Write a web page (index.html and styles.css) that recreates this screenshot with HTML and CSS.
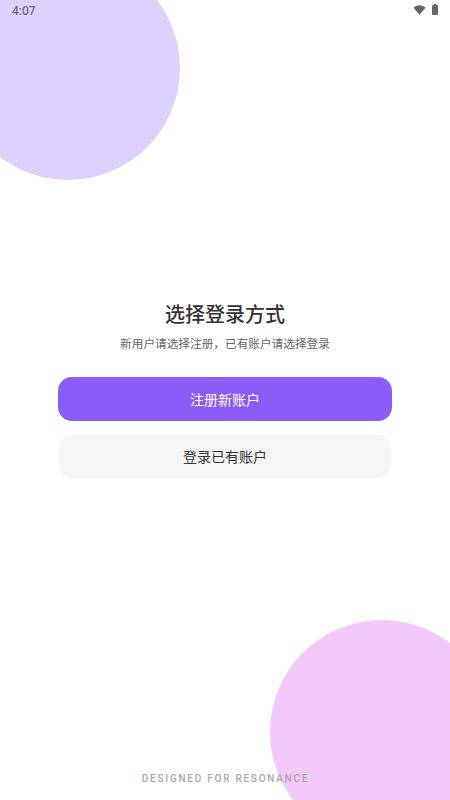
FILE: index.html
```html
<!DOCTYPE html>
<html lang="zh-CN">
<head>
  <meta charset="UTF-8" />
  <title>选择登录方式</title>
  <link rel="stylesheet" href="styles.css">
</head>
<body>
  <div class="screen">
    <div class="blob blob-top"></div>
    <div class="blob blob-bottom"></div>

    <div class="status-bar">
      <span class="time">4:07</span>
      <div class="status-icons">
        <svg class="icon-wifi" width="13" height="10" viewBox="0 0 14 10"><path d="M0.500 2.600C2.200 1 4.500 0 7 0s4.800 1 6.500 2.600L7 10z" fill="#666"/></svg>
        <svg class="icon-battery" width="6" height="11" viewBox="0 0 6 11"><path d="M2 0h2v1h1.200c.4 0 .8.300.8.800v8.400c0 .5-.4.800-.8.800H.8c-.4 0-.8-.3-.8-.8V1.800C0 1.300.4 1 .8 1H2z" fill="#666"/></svg>
      </div>
    </div>

    <main class="content">
      <h1>选择登录方式</h1>
      <p class="hint">新用户请选择注册，已有账户请选择登录</p>
      <button class="btn btn-primary">注册新账户</button>
      <button class="btn btn-secondary">登录已有账户</button>
    </main>

    <footer class="footer">DESIGNED FOR RESONANCE</footer>
  </div>
</body>
</html>
```

FILE: styles.css
```css
* {
  box-sizing: border-box;
  margin: 0;
  padding: 0;
}

body {
  font-family: "Roboto", "Noto Sans CJK SC", sans-serif;
  background: #fff;
  color: #333;
}

.screen {
  position: relative;
  width: 450px;
  height: 800px;
  overflow: hidden;
  display: flex;
  flex-direction: column;
}

/* Background circles */
.blob {
  position: absolute;
  width: 224px;
  height: 224px;
  border-radius: 50%;
}

.blob-top {
  top: -44px;
  left: -44px;
  background: #ddd2fe;
}

.blob-bottom {
  right: -44px;
  bottom: -44px;
  background: #f3c9fb;
}

.status-bar {
  position: relative;
  height: 20px;
  padding: 1px 12px 0;
  display: flex;
  align-items: center;
  justify-content: space-between;
}

.time {
  font-size: 12px;
  font-weight: 500;
  color: #6e6880;
}

.status-icons {
  display: flex;
  align-items: center;
  gap: 6px;
  margin-bottom: 2px;
}

.content {
  position: relative;
  padding: 281px 58px 0;
  display: flex;
  flex-direction: column;
  align-items: center;
}

h1 {
  font-size: 20px;
  font-weight: 500;
  line-height: 28px;
  color: #333;
}

.hint {
  margin-top: 6px;
  margin-bottom: 24px;
  font-size: 11.670px;
  line-height: 18px;
  color: #666;
}

.btn {
  width: 100%;
  height: 44px;
  border: none;
  border-radius: 14px;
  font-family: inherit;
  font-size: 14px;
}

.btn-primary {
  background: #8b5cf6;
  color: #fff;
}

.btn-secondary {
  width: 332px;
  height: 43px;
  margin-top: 13.500px;
  background: #f6f6f6;
  color: #333;
}

.footer {
  position: absolute;
  left: 1px;
  right: 0;
  bottom: 15px;
  text-align: center;
  font-size: 10px;
  font-weight: 500;
  line-height: 12px;
  letter-spacing: 1.750px;
  color: #aea7a7;
}
```
